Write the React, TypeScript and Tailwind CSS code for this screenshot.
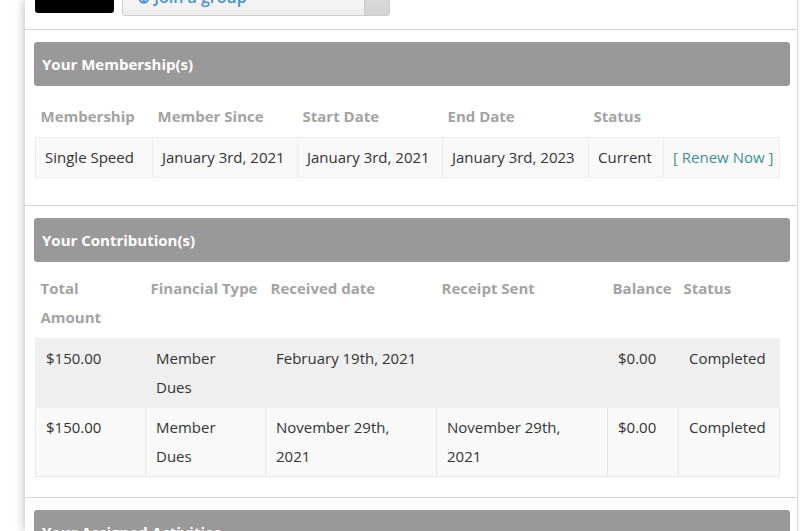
const font = { fontFamily: '"Open Sans", "Liberation Sans", sans-serif' };

type Col = { label: React.ReactNode; width: number };

const membershipCols: Col[] = [
  { label: "Membership", width: 117 },
  { label: "Member Since", width: 145 },
  { label: "Start Date", width: 145 },
  { label: "End Date", width: 146 },
  { label: "Status", width: 75 },
  { label: "", width: 116 },
];

const contributionCols: Col[] = [
  { label: <>Total<br />Amount</>, width: 110 },
  { label: "Financial Type", width: 120 },
  { label: "Received date", width: 171 },
  { label: "Receipt Sent", width: 171 },
  { label: "Balance", width: 71 },
  { label: "Status", width: 101 },
];

const contributions = [
  {
    total: "$150.00",
    type: <>Member<br />Dues</>,
    received: "February 19th, 2021",
    receipt: "",
    balance: "$0.00",
    status: "Completed",
  },
  {
    total: "$150.00",
    type: <>Member<br />Dues</>,
    received: <>November 29th,<br />2021</>,
    receipt: <>November 29th,<br />2021</>,
    balance: "$0.00",
    status: "Completed",
  },
];

function SectionHeader({ title }: { title: string }) {
  return (
    <div className="flex h-[44px] items-center rounded-[3px] bg-[#999999] pl-[8px] text-[15px] font-bold text-white">
      {title}
    </div>
  );
}

function HeadRow({ cols }: { cols: Col[] }) {
  return (
    <tr>
      {cols.map((c, i) => (
        <th
          key={i}
          style={{ width: c.width }}
          className="px-[5px] py-[6px] text-left align-top text-[15px] font-bold leading-[29px] text-[#a3a3a3]"
        >
          {c.label}
        </th>
      ))}
    </tr>
  );
}

function App() {
  return (
    <div style={font} className="flex h-[531px] w-[800px] overflow-hidden bg-white">
      <div className="w-[25px] shrink-0 bg-white" />
      <div className="relative w-[773px] shrink-0 border-r border-[#dcdcdc] bg-white shadow-[-3px_0_8px_rgba(0,0,0,0.18)]">
        {/* top toolbar, mostly scrolled off */}
        <div className="flex h-[30px] items-start border-b border-[#d6d6d6]">
          <div className="ml-[10px] mt-[-27px] h-[40px] w-[79px] rounded-[3px] bg-black" />
          <div className="ml-[8px] mt-[-28px] flex h-[44px] w-[268px] overflow-hidden rounded-[3px] border border-[#cccccc] bg-gradient-to-b from-white to-[#eeeeee]">
            <div className="flex flex-1 items-center pl-[14px] pt-[5px] text-[16px] font-semibold text-[#4a90d2]">
              ⊕ Join a group
            </div>
            <div className="w-[25px] border-l border-[#c8c8c8] bg-gradient-to-b from-[#e6e6e6] to-[#d2d2d2]" />
          </div>
        </div>

        {/* memberships */}
        <div className="border-b border-[#d6d6d6] pb-[27px] pl-[9px] pr-[7px] pt-[12px]">
          <SectionHeader title="Your Membership(s)" />
          <table className="ml-px mt-[10px] w-[744px] table-fixed border-collapse">
            <thead>
              <HeadRow cols={membershipCols} />
            </thead>
            <tbody>
              <tr className="bg-[#f9f9f9] text-[15px] leading-[29px] text-[#333333]">
                {["Single Speed", "January 3rd, 2021", "January 3rd, 2021", "January 3rd, 2023", "Current"].map(
                  (v, i) => (
                    <td key={i} className="whitespace-nowrap border border-[#ececec] px-[9px] py-[5px]">
                      {v}
                    </td>
                  ),
                )}
                <td className="whitespace-nowrap border border-[#ececec] px-[9px] py-[5px] text-[#3f9191]">
                  [ Renew Now ]
                </td>
              </tr>
            </tbody>
          </table>
        </div>

        {/* contributions */}
        <div className="border-b border-[#d6d6d6] pb-[20px] pl-[9px] pr-[7px] pt-[12px]">
          <SectionHeader title="Your Contribution(s)" />
          <table className="ml-px mt-[6px] w-[744px] table-fixed border-collapse">
            <thead>
              <HeadRow cols={contributionCols} />
            </thead>
            <tbody>
              {contributions.map((r, i) => (
                <tr
                  key={i}
                  className={`text-[15px] leading-[29px] text-[#333333] ${i === 0 ? "bg-[#efefef]" : "bg-[#f9f9f9]"}`}
                >
                  {[r.total, r.type, r.received, r.receipt, r.balance, r.status].map((v, j) => (
                    <td
                      key={j}
                      className={`whitespace-nowrap px-[10px] py-[5px] align-top ${i === 0 ? "border border-[#efefef]" : "border border-[#e8e8e8]"}`}
                    >
                      {v}
                    </td>
                  ))}
                </tr>
              ))}
            </tbody>
          </table>
        </div>

        {/* activities */}
        <div className="pl-[9px] pr-[7px] pt-[12px]">
          <SectionHeader title="Your Assigned Activities" />
        </div>
      </div>
    </div>
  );
}

export default App;
